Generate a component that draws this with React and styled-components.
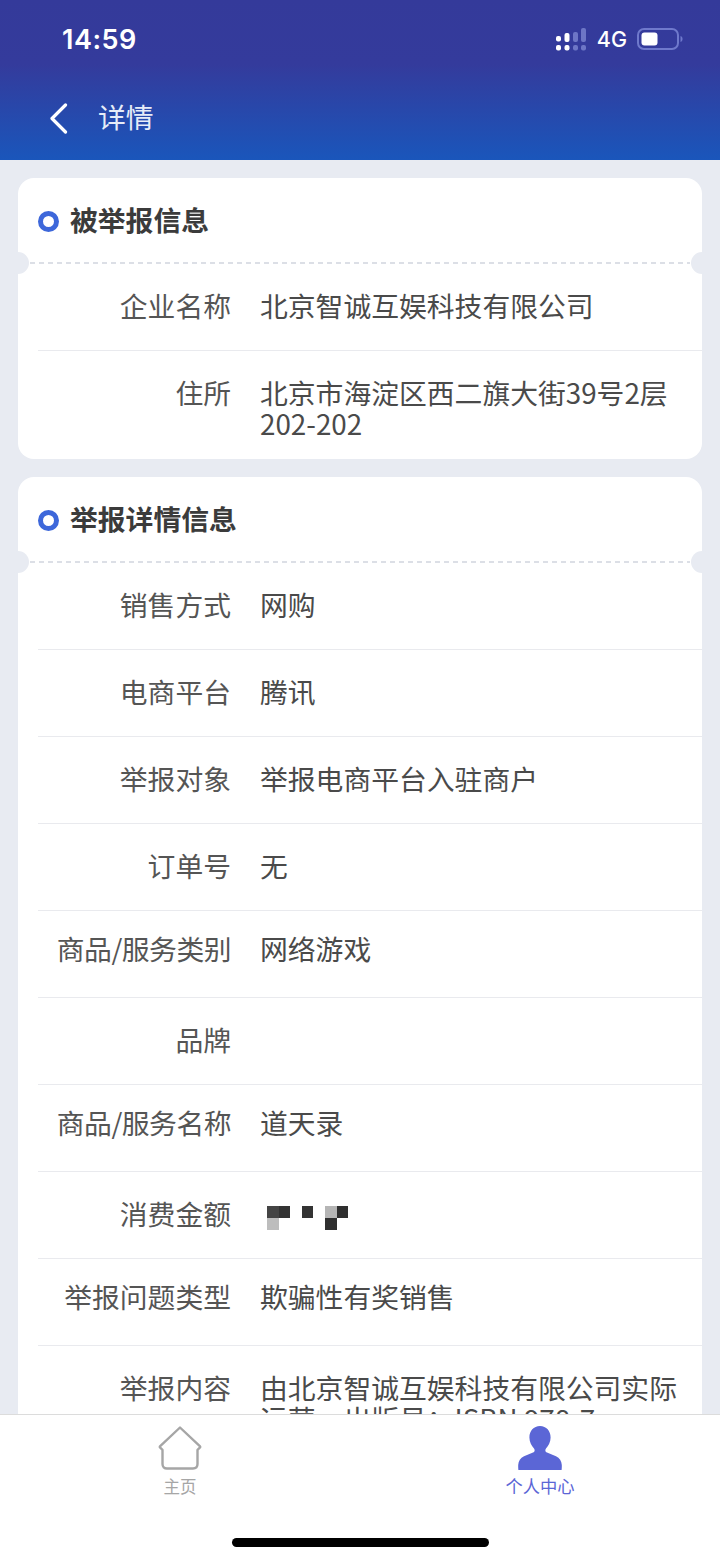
import React from 'react'
import styled, { createGlobalStyle } from 'styled-components'

const CJK = `"Noto Sans CJK SC", "Inter", sans-serif`

const basicRows = [
  { label: '企业名称', value: '北京智诚互娱科技有限公司' },
  { label: '住所', value: '北京市海淀区西二旗大街39号2层202-202' },
]

const detailRows = [
  { label: '销售方式', value: '网购' },
  { label: '电商平台', value: '腾讯' },
  { label: '举报对象', value: '举报电商平台入驻商户' },
  { label: '订单号', value: '无' },
  { label: '商品/服务类别', value: '网络游戏', raised: true, narrow: true },
  { label: '品牌', value: '' },
  { label: '商品/服务名称', value: '道天录', raised: true, narrow: true },
  { label: '消费金额', mosaic: true },
  { label: '举报问题类型', value: '欺骗性有奖销售', raised: true },
  { label: '举报内容', value: '由北京智诚互娱科技有限公司实际运营，出版号：ISBN 978-7' },
]

const App = () => {
  return (
    <Page>
      <GlobalStyle />
      <TopBar>
        <StatusBar>
          <Clock>14:59</Clock>
          <StatusIcons>
            <SignalIcon />
            <Network>4G</Network>
            <BatteryIcon />
          </StatusIcons>
        </StatusBar>
        <NavBar>
          <BackIcon />
          <NavTitle>详情</NavTitle>
        </NavBar>
      </TopBar>

      <Content>
        <InfoCard title="被举报信息" rows={basicRows} />
        <InfoCard title="举报详情信息" rows={detailRows} />
      </Content>

      <TabBar>
        <Tabs>
          <Tab>
            <HomeIcon />
            <TabLabel>主页</TabLabel>
          </Tab>
          <Tab $active>
            <UserIcon />
            <TabLabel $active>个人中心</TabLabel>
          </Tab>
        </Tabs>
        <HomeIndicator />
      </TabBar>
    </Page>
  )
}

export default App

const InfoCard = ({ title, rows }) => (
  <Card>
    <CardHeader>
      <Ring />
      <CardTitle>{title}</CardTitle>
    </CardHeader>
    {rows.map((row) => (
      <Row key={row.label} $raised={row.raised}>
        <Label $narrow={row.narrow}>{row.label}</Label>
        <Value>{row.mosaic ? <Mosaic /> : row.value}</Value>
      </Row>
    ))}
  </Card>
)

const SignalIcon = () => (
  <svg width="30" height="23" viewBox="0 0 30 23">
    <g fill="#fff">
      <rect x="0" y="8" width="5" height="5.500" rx="2" />
      <rect x="0" y="17" width="5" height="5.500" rx="2" />
      <rect x="8.500" y="5" width="5" height="9" rx="2" />
      <rect x="8.500" y="17" width="5" height="5.500" rx="2" />
    </g>
    <g fill="#6d76c6">
      <rect x="17" y="4" width="5" height="10" rx="2" />
      <rect x="17" y="17" width="5" height="5.500" rx="2" />
      <rect x="25" y="0" width="5" height="14" rx="2" />
      <rect x="25" y="17" width="5" height="5.500" rx="2" />
    </g>
  </svg>
)

const BatteryIcon = () => (
  <svg width="46" height="22" viewBox="0 0 46 22">
    <rect x="1" y="1" width="40" height="20" rx="6" fill="none" stroke="#6f79cc" strokeWidth="2" />
    <rect x="4.500" y="4.500" width="16" height="13" rx="3" fill="#fff" />
    <path d="M43.500 8c1.600.6 2 1.600 2 3s-.4 2.400-2 3z" fill="#6f79cc" />
  </svg>
)

const BackIcon = () => (
  <svg width="19" height="31" viewBox="0 0 19 31">
    <path d="M16.500 2 3 15.500 16.500 29" fill="none" stroke="#fff" strokeWidth="3.200" strokeLinecap="round" strokeLinejoin="round" />
  </svg>
)

const HomeIcon = () => (
  <svg width="44" height="44" viewBox="0 0 44 44">
    <path
      d="M22 1.500 41.800 20.200c.5.5.5 1 0 1.500l-2.300 2.100V38c0 2.800-1.700 4.500-4.500 4.500H9c-2.800 0-4.500-1.700-4.500-4.500V23.800l-2.300-2.100c-.5-.5-.5-1 0-1.500z"
      fill="none"
      stroke="#a6a6a6"
      strokeWidth="2.400"
      strokeLinejoin="round"
    />
  </svg>
)

const UserIcon = () => (
  <svg width="44" height="44" viewBox="0 0 44 44">
    <path
      d="M22 0c6.400 0 10.600 5 10.600 11.400 0 4.600-2.200 8.400-4.600 11-1.200 1.400-.8 3.400 1 4.200l9 3.600c3.600 1.500 5.600 4.800 5.800 8.800.1 2.800-.2 5-.2 5H.4s-.3-2.200-.2-5c.2-4 2.200-7.300 5.800-8.800l9-3.600c1.800-.8 2.200-2.800 1-4.200-2.400-2.600-4.600-6.400-4.600-11C11.400 5 15.600 0 22 0z"
      fill="#5b66d6"
    />
  </svg>
)

// masked amount, three clusters of pixel blocks
const Mosaic = () => (
  <MosaicGraphic width="82" height="24" viewBox="0 0 82 24">
    <rect x="0" y="0" width="12" height="12" fill="#444" />
    <rect x="12" y="0" width="11" height="12" fill="#333" />
    <rect x="0" y="12" width="12" height="12" fill="#bdbdbd" />
    <rect x="35" y="0" width="11" height="12" fill="#333" />
    <rect x="58" y="0" width="12" height="12" fill="#b5b5b5" />
    <rect x="70" y="0" width="11" height="12" fill="#2f2f2f" />
    <rect x="58" y="12" width="12" height="12" fill="#2f2f2f" />
  </MosaicGraphic>
)

const GlobalStyle = createGlobalStyle`
  html, body {
    margin: 0;
    padding: 0;
    background: #e8ebf2;
  }

  * {
    box-sizing: border-box;
  }

  svg {
    display: block;
  }
`

const Page = styled.div`
  display: flex;
  flex-direction: column;
  height: 100vh;
  overflow: hidden;
  font-family: ${CJK};
`

const TopBar = styled.header`
  flex: none;
  height: 160px;
  background: linear-gradient(180deg, #343a9a 0%, #343b9c 40%, #1a56bb 100%);
  color: #fff;
`

const StatusBar = styled.div`
  display: flex;
  align-items: center;
  justify-content: space-between;
  height: 78px;
  padding: 0 37px 0 62px;
`

const Clock = styled.span`
  font-family: "Inter", sans-serif;
  font-size: 27px;
  font-weight: 600;
  letter-spacing: 0.5px;
`

const StatusIcons = styled.div`
  display: flex;
  align-items: center;
  gap: 11px;
`

const Network = styled.span`
  font-family: "Inter", sans-serif;
  font-size: 21.500px;
  font-weight: 500;
  margin-right: -1px;
`

const NavBar = styled.div`
  display: flex;
  align-items: center;
  gap: 30px;
  height: 80px;
  padding-left: 49px;
`

const NavTitle = styled.span`
  margin-bottom: 4px;
  font-size: 27.800px;
  color: #e6ecf8;
`

const Content = styled.main`
  flex: 1;
  min-height: 0;
  overflow: hidden;
  display: flex;
  flex-direction: column;
  gap: 18px;
  padding: 18px 18px 0;
`

const Card = styled.section`
  flex: none;
  background: #fff;
  border-radius: 16px;
  padding-left: 20px;
`

const CardHeader = styled.div`
  position: relative;
  display: flex;
  align-items: center;
  gap: 11px;
  height: 86px;
  margin: 0 12px 0 -8px;
  padding-left: 8px;
  background: repeating-linear-gradient(90deg, #dcdfe6 0 5px, transparent 5px 9px) left bottom / 100% 2px no-repeat;

  /* ticket notches on both card edges */
  &::before,
  &::after {
    content: '';
    position: absolute;
    bottom: -10px;
    width: 22px;
    height: 22px;
    border-radius: 50%;
    background: #e8ebf2;
  }

  &::before {
    left: -23px;
  }

  &::after {
    right: -23px;
  }
`

const Ring = styled.span`
  flex: none;
  width: 21px;
  height: 21px;
  border: 5px solid #3d67da;
  border-radius: 50%;
`

const CardTitle = styled.h2`
  margin: 0 0 4px;
  font-size: 27.800px;
  font-weight: 700;
  line-height: 36px;
  color: #3b3b3b;
`

const Row = styled.div`
  display: grid;
  grid-template-columns: 193px 1fr;
  column-gap: 29px;
  padding: ${(p) => (p.$raised ? '22px 20px 33px 0' : '26px 20px 29px 0')};
  border-bottom: 1px solid #e9eaee;

  &:last-child {
    padding-bottom: 20px;
    border-bottom: none;
  }
`

const Label = styled.div`
  font-size: 27.800px;
  line-height: 31px;
  letter-spacing: ${(p) => (p.$narrow ? '-0.5px' : '0')};
  text-align: right;
  color: #555;
  white-space: nowrap;
`

const Value = styled.div`
  min-height: 31px;
  font-size: 27.800px;
  line-height: 31px;
  color: #4a4a4a;
`

const MosaicGraphic = styled.svg`
  margin: 8px 0 -1px 7px;
  filter: blur(0.4px);
`

const TabBar = styled.nav`
  flex: none;
  height: 144px;
  display: flex;
  flex-direction: column;
  background: #fff;
  border-top: 1px solid #dcdcdc;
`

const Tabs = styled.div`
  display: grid;
  grid-template-columns: 1fr 1fr;
  padding-top: 11px;
`

const Tab = styled.div`
  display: flex;
  flex-direction: column;
  align-items: center;
  color: ${(p) => (p.$active ? '#5b66d6' : '#a6a6a6')};
`

const TabLabel = styled.span`
  margin-top: 4px;
  font-size: ${(p) => (p.$active ? '17.300px' : '16.500px')};
  line-height: 24px;
`

const HomeIndicator = styled.div`
  width: 257px;
  height: 9px;
  margin: 40px auto 0;
  border-radius: 5px;
  background: #000;
`
